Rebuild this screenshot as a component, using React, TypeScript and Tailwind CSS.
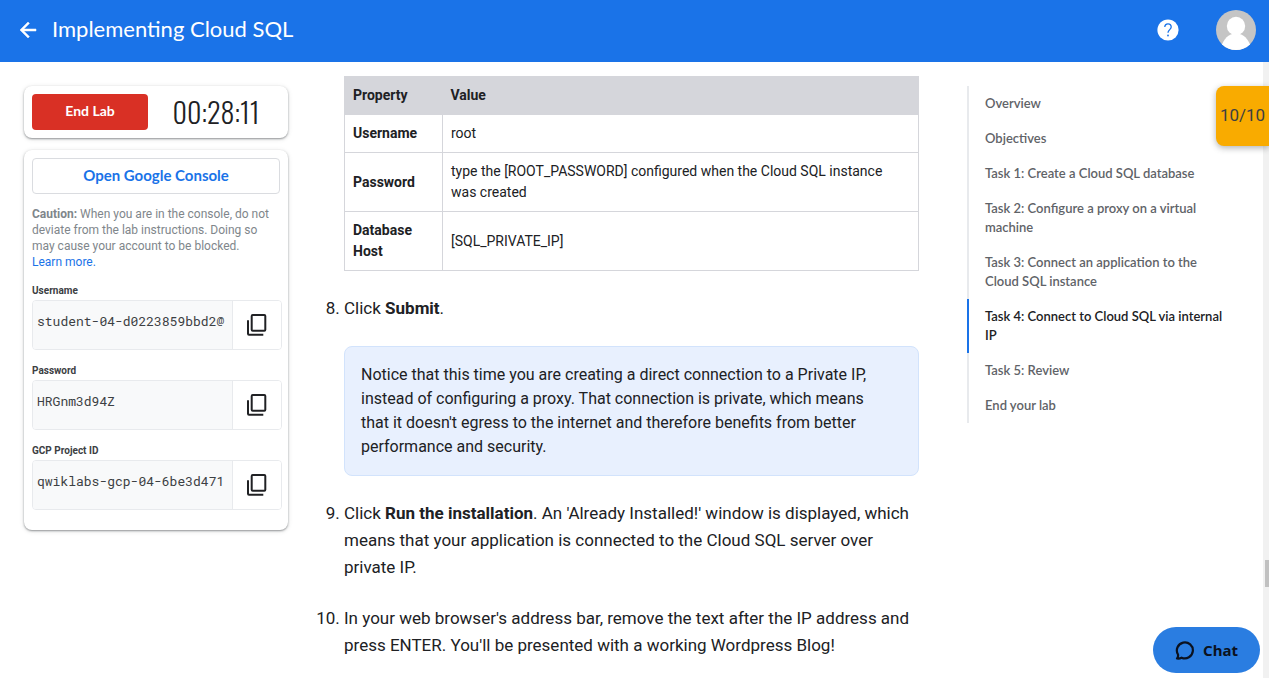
import type { ReactNode } from "react";

const credentials = [
  { id: "username", label: "Username", value: "student-04-d0223859bbd2@" },
  { id: "password", label: "Password", value: "HRGnm3d94Z" },
  { id: "project", label: "GCP Project ID", value: "qwiklabs-gcp-04-6be3d471" },
];

const outline = [
  "Overview",
  "Objectives",
  "Task 1: Create a Cloud SQL database",
  "Task 2: Configure a proxy on a virtual machine",
  "Task 3: Connect an application to the Cloud SQL instance",
  "Task 4: Connect to Cloud SQL via internal IP",
  "Task 5: Review",
  "End your lab",
];

const activeSection = 5;

const properties = [
  { name: "Username", value: "root" },
  {
    name: "Password",
    value: "type the [ROOT_PASSWORD] configured when the Cloud SQL instance was created",
  },
  { name: "Database Host", value: "[SQL_PRIVATE_IP]" },
];

function Header() {
  return (
    <header className="flex h-[62px] shrink-0 items-center bg-[#1a73e8] pr-[13px] pb-[2px] pl-4 text-white">
      <a href="#back" aria-label="Back" className="mr-3">
        <svg viewBox="0 0 24 24" className="size-6" fill="currentColor" stroke="currentColor" strokeWidth="0.5">
          <path d="M20 11H7.83l5.59-5.59L12 4l-8 8 8 8 1.41-1.41L7.83 13H20v-2z" />
        </svg>
      </a>
      <h1 className="pb-[2px] font-['Lato',sans-serif] text-[22px] leading-7">
        Implementing Cloud SQL
      </h1>
      <button type="button" aria-label="Help" className="ml-auto">
        <svg viewBox="0 0 22 22" className="size-[22px]">
          <circle cx="11" cy="11" r="10.600" fill="#fff" />
          <path
            d="M7.800 8a3.200 3.200 0 0 1 6.400 0c0 2.500-3.200 2.800-3.200 5.800"
            fill="none"
            stroke="#1a73e8"
            strokeWidth="1.300"
          />
          <circle cx="11" cy="16.500" r="0.9" fill="#1a73e8" />
        </svg>
      </button>
      <button type="button" aria-label="Account" className="ml-[37px]">
        <svg viewBox="0 0 40 40" className="size-10 rounded-full">
          <rect width="40" height="40" fill="#c5c5c5" />
          <circle cx="20" cy="16" r="9.200" fill="#fff" />
          <path d="M5 40v-3C8 29 12 23.500 20 23.500S32 29 35 37v3z" fill="#fff" />
        </svg>
      </button>
    </header>
  );
}

function Card({ className, children }: { className: string; children: ReactNode }) {
  return (
    <section
      className={`rounded-lg bg-white shadow-[0_1px_2px_rgba(60,64,67,0.5),0_1px_5px_rgba(60,64,67,0.15)] ${className}`}
    >
      {children}
    </section>
  );
}

function CopyIcon() {
  return (
    <svg viewBox="0 0 24 24" className="size-6" fill="none" stroke="#202124" strokeWidth="2" strokeLinejoin="round">
      <rect x="6.700" y="2" width="13.600" height="15.700" rx="1" />
      <path d="M3 7.300V20.700a1 1 0 0 0 1 1H18.300" />
    </svg>
  );
}

function ControlPanel() {
  return (
    <aside className="flex w-[264px] shrink-0 flex-col gap-3 pt-6">
      <Card className="flex items-center p-2">
        <button
          type="button"
          className="h-9 w-[116px] rounded bg-[#d93025] pb-[2px] font-['Lato',sans-serif] text-sm font-bold text-white"
        >
          End Lab
        </button>
        <time className="flex-1 pl-1 text-center font-['Oswald','Roboto_Condensed','Roboto',sans-serif] text-[28px] leading-9 font-light text-[#202124]">
          00:28:11
        </time>
      </Card>
      <Card className="flex flex-col gap-3 px-2 pt-2 pb-5">
        <button
          type="button"
          className="h-9 rounded border border-[#dadce0] pb-[2px] font-['Lato',sans-serif] text-[15px] font-bold text-[#1a73e8]"
        >
          Open Google Console
        </button>
        <p className="text-xs leading-4 text-[#80868b]">
          <b className="font-bold">Caution:</b> When you are in the console, do not deviate from the lab
          instructions. Doing so may cause your account to be blocked.{" "}
          <a href="#learn-more" className="whitespace-nowrap text-[#1a73e8]">
            Learn more.
          </a>
        </p>
        {credentials.map(({ id, label, value }) => (
          <div key={id} className="-mr-[2px]">
            <label htmlFor={id} className="block text-[10px] leading-[18px] font-bold text-[#3c4043]">
              {label}
            </label>
            <div className="flex h-[50px] overflow-hidden rounded border border-[#e8eaed]">
              <input
                id={id}
                readOnly
                defaultValue={value}
                className="min-w-0 flex-1 bg-[#f8f9fa] pb-[6px] pl-1 font-['Roboto_Mono','Liberation_Mono',monospace] text-[13px] text-[#3c4043] outline-none"
              />
              <button
                type="button"
                aria-label={`Copy ${label}`}
                className="flex w-[49px] items-center justify-center border-l border-[#e8eaed] bg-white"
              >
                <CopyIcon />
              </button>
            </div>
          </div>
        ))}
      </Card>
    </aside>
  );
}

function Instructions() {
  return (
    <main className="min-w-0 flex-1 pt-[14px] text-[#202124]">
      <div className="pl-8">
        <table className="w-full border-collapse border border-[#d5d6db] text-left text-sm leading-[21px]">
          <thead className="bg-[#d5d6db]">
            <tr>
              <th className="w-[98px] p-2 font-bold">Property</th>
              <th className="p-2 font-bold">Value</th>
            </tr>
          </thead>
          <tbody>
            {properties.map(({ name, value }) => (
              <tr key={name}>
                <th scope="row" className="border border-[#d5d6db] p-2 font-bold">
                  {name}
                </th>
                <td className="border border-[#d5d6db] p-2">{value}</td>
              </tr>
            ))}
          </tbody>
        </table>
      </div>
      <ol start={8} className="mt-6 flex list-decimal flex-col gap-6 pl-8 text-[17px] leading-[27px]">
        <li>
          Click <b className="font-bold">Submit</b>.
          <p className="mt-6 rounded-lg border border-[#d2e3fc] bg-[#e8f0fe] py-4 pr-8 pl-4 text-base leading-6">
            Notice that this time you are creating a direct connection to a Private IP, instead of configuring
            a proxy. That connection is private, which means that it doesn't egress to the internet and
            therefore benefits from better performance and security.
          </p>
        </li>
        <li>
          Click <b className="font-bold">Run the installation</b>. An 'Already Installed!' window is displayed,
          which means that your application is connected to the Cloud SQL server over private IP.
        </li>
        <li>
          In your web browser's address bar, remove the text after the IP address and press ENTER. You'll be
          presented with a working Wordpress Blog!
        </li>
      </ol>
    </main>
  );
}

function Outline() {
  return (
    <nav aria-label="Lab outline" className="w-[272px] shrink-0 pt-6">
      <ul className="font-['Lato',sans-serif] text-[13px] leading-[19px] font-semibold">
        {outline.map((title, i) => (
          <li key={title}>
            <a
              href={`#section-${i}`}
              className={
                i === activeSection
                  ? "block border-l-2 border-[#1a73e8] py-2 pr-3 pl-4 text-[#202124]"
                  : "block border-l-2 border-[#e8eaed] py-2 pr-3 pl-4 text-[#5f6368]"
              }
            >
              {title}
            </a>
          </li>
        ))}
      </ul>
    </nav>
  );
}

export default function App() {
  return (
    <div className="relative flex h-screen flex-col overflow-hidden bg-white font-['Roboto',sans-serif]">
      <Header />
      <div className="flex min-h-0 flex-1">
        <div className="flex min-w-0 flex-1 pl-6">
          <ControlPanel />
          <div className="flex min-w-0 flex-1 gap-12 pr-6 pl-6">
            <Instructions />
            <Outline />
          </div>
        </div>
        <div className="flex w-[6px] shrink-0 flex-col items-end bg-[#f1f1f1]">
          <div className="mt-[498px] h-[27px] w-1 bg-[#c1c1c1]" />
        </div>
      </div>
      <div className="absolute top-[86px] right-0 flex h-[60px] w-[53px] items-center justify-center rounded-l-lg bg-[#f9ab00] text-[17px] text-[#3c4043] shadow-[0_2px_6px_rgba(60,64,67,0.4)]">
        10/10
      </div>
      <button
        type="button"
        className="absolute right-[9px] bottom-[5px] flex h-[46px] w-[107px] items-center justify-center gap-2 rounded-full bg-[#2a7de1] font-['Noto_Sans',sans-serif] text-[15px] font-bold text-[#0b1220]"
      >
        <svg viewBox="0 0 20 20" className="size-5" fill="none" stroke="currentColor" strokeWidth="2.200">
          <path
            d="M2 18.500c1-1 1.300-2.200 1-4a8 8 0 1 1 3.600 3.200c-1.400.8-3 1-4.600.8z"
            strokeLinejoin="round"
          />
        </svg>
        Chat
      </button>
    </div>
  );
}
